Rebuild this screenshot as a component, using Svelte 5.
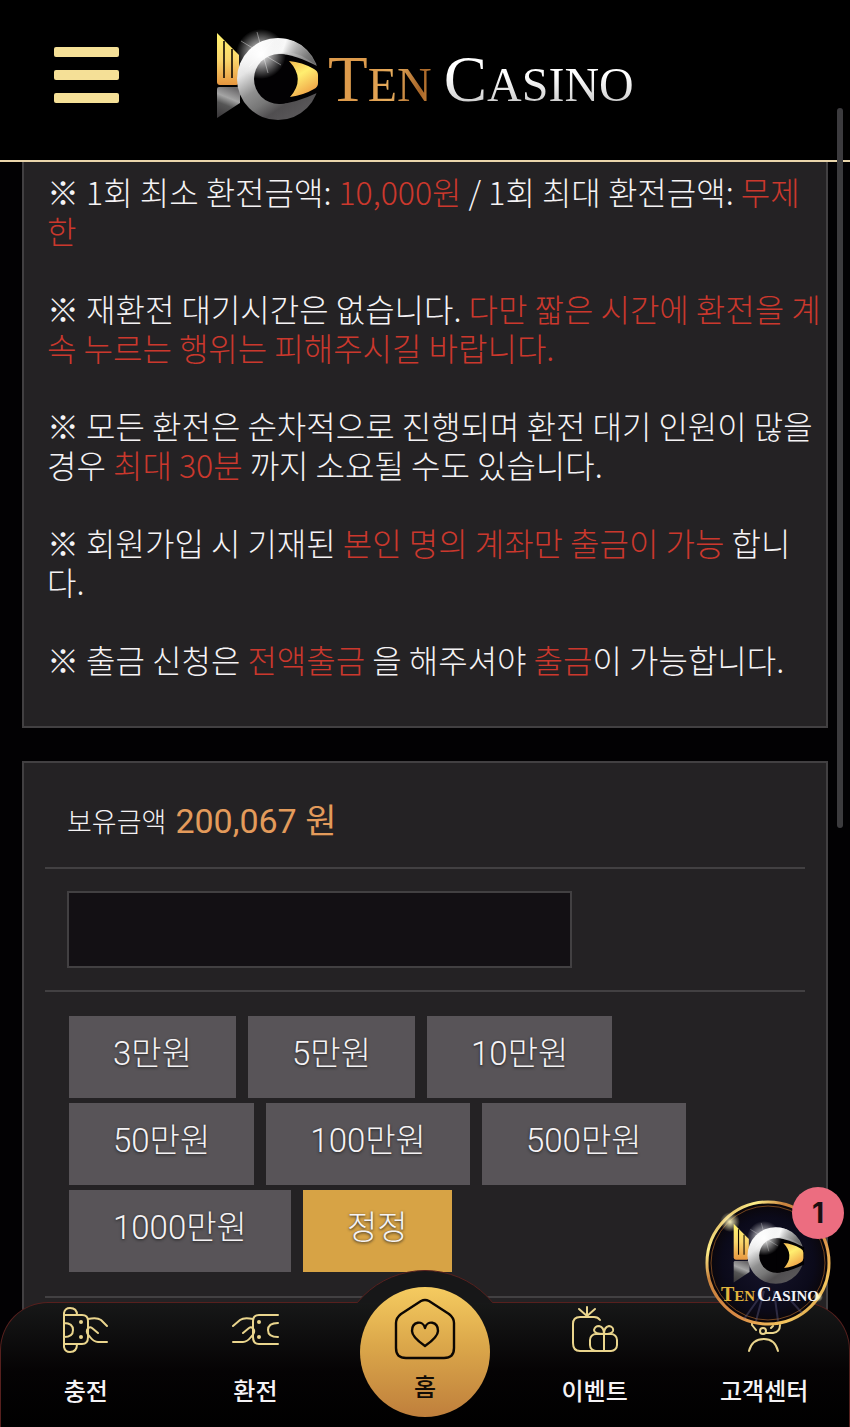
<script>
  const amounts = ['3만원', '5만원', '10만원', '50만원', '100만원', '500만원', '1000만원'];
  let amount = $state('');
</script>

{#snippet fish(id)}
  <defs>
    <linearGradient id="{id}-gold" x1="0" y1="0" x2="0" y2="1">
      <stop offset="0" stop-color="#fff36e" />
      <stop offset="0.5" stop-color="#fbd76c" />
      <stop offset="1" stop-color="#e6963f" />
    </linearGradient>
    <linearGradient id="{id}-ring" x1="0.1" y1="0.1" x2="0.7" y2="1">
      <stop offset="0" stop-color="#ffffff" />
      <stop offset="0.25" stop-color="#e4e4e4" />
      <stop offset="0.48" stop-color="#909090" />
      <stop offset="0.65" stop-color="#777" />
      <stop offset="0.8" stop-color="#504e50" />
      <stop offset="1" stop-color="#5a585a" />
    </linearGradient>
    <linearGradient id="{id}-shade" x1="0.3" y1="0.2" x2="1" y2="0.3">
      <stop offset="0" stop-color="#fff" stop-opacity="0" />
      <stop offset="0.3" stop-color="#fff" stop-opacity="0.75" />
      <stop offset="0.6" stop-color="#999" stop-opacity="0.5" />
      <stop offset="1" stop-color="#444" stop-opacity="0.4" />
    </linearGradient>
    <linearGradient id="{id}-tail" x1="0.6" y1="0" x2="0.3" y2="1">
      <stop offset="0" stop-color="#6c6a6c" />
      <stop offset="0.35" stop-color="#a5a5a5" />
      <stop offset="0.6" stop-color="#555" />
      <stop offset="1" stop-color="#3c3a3c" />
    </linearGradient>
    <linearGradient id="{id}-eye" x1="0" y1="0" x2="0.5" y2="1">
      <stop offset="0" stop-color="#f4b94e" />
      <stop offset="0.45" stop-color="#ffee70" />
      <stop offset="1" stop-color="#f0a548" />
    </linearGradient>
    <radialGradient id="{id}-glow">
      <stop offset="0" stop-color="#fff" />
      <stop offset="0.35" stop-color="#fff" stop-opacity="0.65" />
      <stop offset="1" stop-color="#fff" stop-opacity="0" />
    </radialGradient>
  </defs>
  <path d="M1 4 23 26V53Q23 56 20 56H4Q1 56 1 53Z" fill="url(#{id}-gold)" />
  <path d="M8 12V49M16 20V49" stroke="#100b04" stroke-width="1.6" />
  <path d="M3 58H24V74L1 89V60Q1 58 3 58Z" fill="url(#{id}-tail)" />
  <circle cx="62" cy="50" r="41" fill="url(#{id}-ring)" />
  <path d="M36 18A41 41 0 0 1 100 36L86 27Q62 17 42 36Z" fill="url(#{id}-shade)" />
  <circle cx="63" cy="50" r="25" fill="#020103" />
  <path d="M63 25Q78 25 103 38V63Q80 74 63 75Z" fill="#020103" />
  <path d="M73 32Q86 33 98 40Q102 42 102 46V54Q102 58 98 60Q88 66 74 68Q90 50 73 32Z" fill="url(#{id}-eye)" />
  <circle cx="45" cy="25" r="25" fill="url(#{id}-glow)" />
  <path d="M41 3 52 44M25 12 65 36M57 12 33 38" stroke="#fff" stroke-opacity="0.5" stroke-width="0.8" />
{/snippet}

<div class="app">
  <header>
    <button class="burger" aria-label="메뉴"><i></i><i></i><i></i></button>
    <a class="brand" href="#home">
      <svg width="104" height="92" viewBox="0 0 104 92" aria-hidden="true">{@render fish('top')}</svg>
      <span class="wordmark"><span class="gold">T<small>EN</small></span><span class="silver">C<small>ASINO</small></span></span>
    </a>
  </header>

  <main>
    <section class="panel notice">
      <p>※ 1회 최소 환전금액: <em>10,000원</em> / 1회 최대 환전금액: <em>무제한</em></p>
      <p>※ 재환전 대기시간은 없습니다. <em>다만 짧은 시간에 환전을 계속 누르는 행위는 피해주시길 바랍니다.</em></p>
      <p>※ 모든 환전은 순차적으로 진행되며 환전 대기 인원이 많을 경우 <em>최대 30분</em> 까지 소요될 수도 있습니다.</p>
      <p>※ 회원가입 시 기재된 <em>본인 명의 계좌만 출금이 가능</em> 합니다.</p>
      <p>※ 출금 신청은 <em>전액출금</em> 을 해주셔야 <em>출금</em>이 가능합니다.</p>
    </section>

    <section class="panel form">
      <div class="row balance">
        <label for="amount">보유금액</label>
        <strong>200,067 원</strong>
      </div>
      <div class="row field">
        <input id="amount" type="text" inputmode="numeric" bind:value={amount} />
      </div>
      <div class="row amounts">
        {#each amounts as label}
          <button onclick={() => (amount = label)}>{label}</button>
        {/each}
        <button class="reset" onclick={() => (amount = '')}>정정</button>
      </div>
      <div class="row rest"></div>
    </section>
  </main>

  <div class="thumb"></div>

  <nav>
    <div class="hump"></div>
    <a href="#deposit">
      <svg viewBox="0 0 48 48" aria-hidden="true">
        <path d="M2 9V7Q3 2 8 2Q15 2 15 9M2 38V41Q3 46 8 46Q15 46 15 38M2 7V41M2 9H20Q26 9 26 15V31Q26 38 20 38H2M2 17Q11 17 11 24Q11 31 2 31" />
        <path d="M26 13Q35 11 39 14L45 20M36 27 30 22Q27 20 25 24Q24 27 28 31Q32 36 36 36H45" />
        <circle class="dot" cx="19" cy="16" r="2" /><circle class="dot" cx="19" cy="31" r="2" />
      </svg>
      <span>충전</span>
    </a>
    <a href="#withdraw">
      <svg viewBox="0 0 48 48" aria-hidden="true">
        <path d="M47 9H28Q22 9 22 15V31Q22 38 28 38H47M47 17Q37 17 37 24Q37 31 47 31" />
        <path d="M22 13Q13 11 9 14L2 20M12 27 18 22Q21 20 23 24Q24 27 20 31Q16 36 12 36H2" />
        <circle class="dot" cx="28" cy="16" r="2" /><circle class="dot" cx="28" cy="31" r="2" />
      </svg>
      <span>환전</span>
    </a>
    <a class="home" href="#home">
      <svg viewBox="0 0 62 62" aria-hidden="true">
        <path d="M27 3Q31 1 35 3L55 16Q60 20 60 25V50Q60 60 50 60H12Q2 60 2 50V25Q2 20 7 16Z" />
        <path d="M31 30C29 22 18 23 18 33Q18 39 31 48Q44 39 44 33C44 23 33 22 31 30Z" />
      </svg>
      <span>홈</span>
    </a>
    <a href="#event">
      <svg viewBox="0 0 48 48" aria-hidden="true">
        <path d="M16 10V1M16 10 8 3M16 10 24 3M29 14Q27 11 23 11H9Q2 11 2 18V37Q2 45 9 45H25" />
        <rect x="19" y="28" width="27" height="17" rx="6" />
        <path d="M33 28V45M33 28Q23 28 23 24Q24 20 28 20Q33 21 33 28Q33 21 38 20Q43 21 42 25Q41 28 33 28" />
      </svg>
      <span>이벤트</span>
    </a>
    <a href="#support">
      <svg viewBox="0 0 48 48" aria-hidden="true">
        <path d="M9 45Q12 33 24 33Q35 33 38 45" />
        <circle cx="23" cy="25" r="3" />
        <path d="M26 27H33Q40 26 40 19M12 19 16 24M33 20 31 22M12 18Q12 5 24 5Q37 5 37 18" />
      </svg>
      <span>고객센터</span>
    </a>
  </nav>

  <button class="chat" aria-label="Ten Casino">
    <svg viewBox="0 0 128 128" aria-hidden="true">
      <defs>
        <linearGradient id="rim" x1="0" y1="0" x2="1" y2="1">
          <stop offset="0" stop-color="#b0672a" />
          <stop offset="0.2" stop-color="#fff08a" />
          <stop offset="0.32" stop-color="#c9833e" />
          <stop offset="0.6" stop-color="#d98a45" />
          <stop offset="0.82" stop-color="#f4c65e" />
          <stop offset="1" stop-color="#a8622c" />
        </linearGradient>
        <radialGradient id="disc">
          <stop offset="0" stop-color="#17152c" />
          <stop offset="0.75" stop-color="#0b0a1a" />
          <stop offset="1" stop-color="#0a0608" />
        </radialGradient>
        <radialGradient id="flare">
          <stop offset="0" stop-color="#fff7c0" stop-opacity="0.95" />
          <stop offset="1" stop-color="#fff7c0" stop-opacity="0" />
        </radialGradient>
      </defs>
      <circle cx="64" cy="64" r="61" fill="url(#disc)" stroke="url(#rim)" stroke-width="3" />
      <circle cx="64" cy="64" r="57" fill="none" stroke="#75451f" stroke-width="1" />
      <path d="M40 120 60 92 52 122M70 92 74 122M80 94 98 114" stroke="#6c6a96" stroke-opacity="0.35" stroke-width="2" fill="none" />
      <circle cx="26" cy="23" r="10" fill="url(#flare)" />
      <g transform="translate(29 22) scale(0.69)">{@render fish('chat')}</g>
      <text x="17" y="102" fill="#e2b53d">T<tspan>EN</tspan></text>
      <text x="53" y="102" fill="#f4f4f8">C<tspan>ASINO</tspan></text>
      <circle cx="114" cy="98" r="5" fill="url(#flare)" />
    </svg>
    <b>1</b>
  </button>
</div>

<style>
  :global(body) {
    background: #020103;
  }
  .app {
    position: relative;
    height: 100vh;
    overflow: hidden;
    display: flex;
    flex-direction: column;
    background: #020103;
    color: #f5f3f5;
    font-family: 'Noto Sans CJK KR', sans-serif;
    font-weight: 300;
  }
  button {
    border: 0;
    padding: 0;
    margin: 0;
    font: inherit;
    color: inherit;
    cursor: pointer;
  }
  a {
    color: inherit;
    text-decoration: none;
  }
  header {
    flex: none;
    height: 160px;
    box-sizing: border-box;
    padding: 0 54px 10px;
    display: flex;
    align-items: center;
    gap: 97px;
    background: #000;
    box-shadow: 0 2px 0 #ead5ab;
    margin-bottom: 2px;
  }
  .burger {
    display: grid;
    gap: 13px;
    width: 65px;
    background: none;
  }
  .burger i {
    height: 10px;
    border-radius: 2px;
    background: #f5e097;
  }
  .brand {
    display: flex;
    align-items: center;
    gap: 8px;
  }
  .wordmark {
    display: flex;
    gap: 12px;
    padding-top: 14px;
    font-family: 'Liberation Serif', serif;
    font-weight: 400;
    font-size: 65px;
    line-height: 72px;
  }
  .wordmark small {
    font-size: 48px;
  }
  .gold,
  .silver {
    background: linear-gradient(100deg, #dd9b4c 40%, #e7ad5e 60%, #a86628 85%, #d18c40);
    background-clip: text;
    color: transparent;
  }
  .silver {
    background-image: linear-gradient(#fff 40%, #e6e6e6 60%, #b8b8b8 90%);
  }
  main {
    flex: 1;
    min-height: 0;
    overflow: hidden;
    padding: 0 22px;
    display: flex;
    flex-direction: column;
    gap: 33px;
  }
  .panel {
    flex: none;
    border: 2px solid #424042;
    background: #242224;
  }
  .notice {
    border-top: 0;
    padding: 10px 0 47px 23px;
    display: grid;
    gap: 39px;
    font-size: 32px;
    line-height: 39px;
    word-break: break-all;
  }
  .notice p {
    margin: 0;
  }
  em {
    font-style: normal;
    color: #cb382d;
  }
  .form {
    padding: 0 21px;
  }
  .row {
    padding: 22px;
    border-bottom: 2px solid #424042;
  }
  .balance {
    display: flex;
    align-items: center;
    gap: 9px;
    padding: 34px 22px 22px;
    line-height: 48px;
    font-size: 27px;
  }
  .balance strong {
    font-family: Roboto, 'Noto Sans CJK KR', sans-serif;
    font-size: 34px;
    font-weight: 400;
    color: #e39b5b;
  }
  .field input {
    display: block;
    box-sizing: border-box;
    width: 70.6%;
    height: 77px;
    border: 2px solid #424042;
    border-radius: 0;
    padding: 0 16px;
    background: #131014;
    color: inherit;
    font: inherit;
    font-size: 32px;
  }
  .amounts {
    display: flex;
    flex-wrap: wrap;
    gap: 5px 12px;
    padding: 24px;
  }
  .amounts button {
    height: 82px;
    padding: 0 44px 6px;
    background: #585458;
    font-family: Roboto, 'Noto Sans CJK KR', sans-serif;
    font-size: 33px;
    line-height: 40px;
    text-shadow: 0 1px 3px #222;
  }
  .amounts .reset {
    background: #d7a345;
  }
  .rest {
    height: 120px;
    border: 0;
  }
  .thumb {
    position: absolute;
    top: 108px;
    right: 7px;
    width: 6px;
    height: 720px;
    border-radius: 3px;
    background: #3c3b3e;
  }
  nav {
    position: absolute;
    left: 0;
    right: 0;
    bottom: 0;
    height: 125px;
    box-sizing: border-box;
    display: grid;
    grid-template-columns: repeat(5, 1fr);
    border: 1px solid #57201e;
    border-bottom: 0;
    border-radius: 48px 48px 0 0;
    background: linear-gradient(#171818, #050304 55%, #000);
    font-size: 24px;
    font-weight: 500;
    line-height: 32px;
  }
  nav a {
    position: relative;
    display: flex;
    flex-direction: column;
    align-items: center;
    padding-top: 3px;
    gap: 20px;
  }
  nav svg {
    width: 48px;
    height: 48px;
    fill: none;
    stroke: #ead58d;
    stroke-width: 2;
    stroke-linecap: round;
    stroke-linejoin: round;
  }
  nav .dot {
    fill: #ead58d;
    stroke: none;
  }
  .hump {
    position: absolute;
    left: 50%;
    top: -33px;
    width: 176px;
    height: 33px;
    margin-left: -88px;
    overflow: hidden;
  }
  .hump::before {
    content: '';
    display: block;
    box-sizing: border-box;
    height: 176px;
    border: 1px solid #57201e;
    border-radius: 50%;
    background: #171718;
  }
  nav .home {
    justify-self: center;
    box-sizing: border-box;
    width: 130px;
    height: 130px;
    margin-top: -16px;
    padding-top: 11px;
    gap: 10px;
    border-radius: 50%;
    background: linear-gradient(#f5cb60, #dba74a 45%, #bf7f3c);
    color: #120c06;
  }
  .home svg {
    width: 62px;
    height: 62px;
    stroke: #0c0703;
    stroke-width: 2.4;
  }
  .chat {
    position: absolute;
    right: 18px;
    bottom: 100px;
    width: 128px;
    height: 128px;
    border-radius: 50%;
    background: none;
  }
  .chat svg {
    display: block;
  }
  .chat text {
    font: 700 20px 'Liberation Serif', serif;
  }
  .chat tspan {
    font-size: 15px;
  }
  .chat b {
    position: absolute;
    top: -12px;
    right: -12px;
    width: 52px;
    height: 52px;
    border-radius: 50%;
    background: #ec6d80;
    color: #1c0e10;
    font: 700 28px/52px Inter, sans-serif;
  }
</style>
